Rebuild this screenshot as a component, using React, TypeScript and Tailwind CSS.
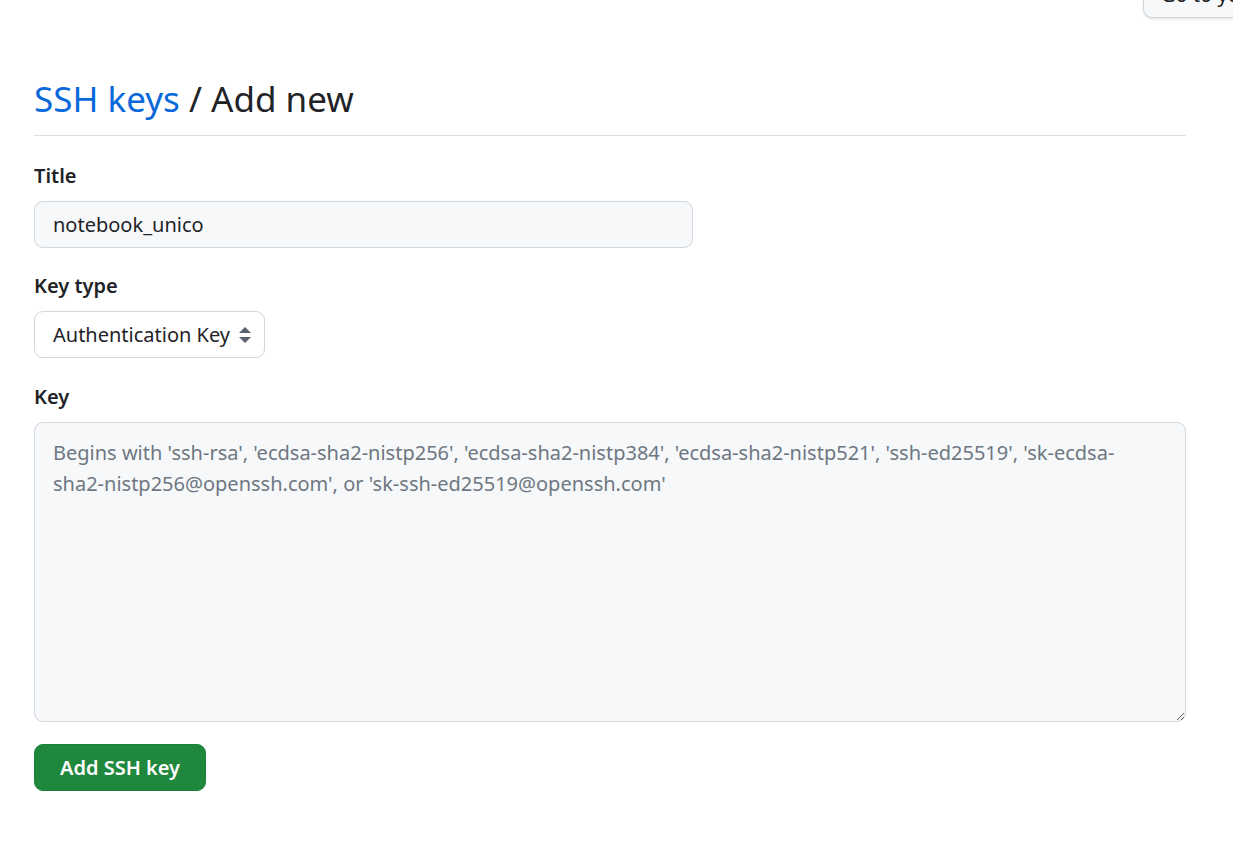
import React from 'react';

export default function App() {
  const placeholder =
    "Begins with 'ssh-rsa', 'ecdsa-sha2-nistp256', 'ecdsa-sha2-nistp384', 'ecdsa-sha2-nistp521', 'ssh-ed25519', 'sk-ecdsa-sha2-nistp256@openssh.com', or 'sk-ssh-ed25519@openssh.com'";

  return (
    <div className="relative min-h-[853px] bg-white text-[#1f2328] overflow-hidden" style={{ fontFamily: '"Noto Sans", "Open Sans", sans-serif' }}>
      {/* skip link peeking from the top */}
      <div className="absolute left-[1143px] top-[-30px] h-[48px] pl-[17px] pr-[18px] flex items-end pb-[7px] border border-[#d0d7de] rounded-[9px] bg-[#f6f8fa] text-[20px] whitespace-nowrap shadow-sm">
        Go to your profile
      </div>

      <div className="w-[1152px] ml-[34px] pt-[72px]">
        <div className="pb-[9px] border-b border-[#d8dee4]">
          <h2 className="text-[35px] leading-[54px] font-normal">
            <a className="text-[#0969da]" href="#">SSH keys</a> / Add new
          </h2>
        </div>

        <form className="mt-[25px]">
          <div>
            <label className="block text-[20px] font-semibold leading-[30px]">Title</label>
            <input
              defaultValue="notebook_unico"
              className="mt-[10px] w-[659px] h-[47px] px-[18px] text-[20px] bg-[#f6f8fa] border border-[#d0d7de] rounded-[9px] outline-none"
            />
          </div>

          <div className="mt-[23px]">
            <label className="block text-[20px] font-semibold leading-[30px]">Key type</label>
            <div className="mt-[10px] w-[231px] h-[47px] pl-[18px] pr-[12px] flex items-center justify-between text-[20px] bg-white border border-[#d0d7de] rounded-[9px]">
              <span>Authentication Key</span>
              <svg width="14" height="20" viewBox="0 0 14 20" fill="#59636e">
                <path d="M7 2 L13 8 H1 Z" />
                <path d="M7 18 L13 12 H1 Z" />
              </svg>
            </div>
          </div>

          <div className="mt-[24px]">
            <label className="block text-[20px] font-semibold leading-[30px]">Key</label>
            <textarea
              placeholder={placeholder}
              className="mt-[10px] block w-[1152px] h-[300px] pl-[18px] pr-[60px] py-[14px] text-[20px] leading-[31px] bg-[#f6f8fa] border border-[#d0d7de] rounded-[9px] outline-none placeholder:text-[#6e7781]"
            />
          </div>

          <button
            type="button"
            className="mt-[22px] h-[47px] w-[172px] rounded-[9px] bg-[#1f883d] text-white text-[20px] font-semibold border border-[#1a7f37]"
          >
            Add SSH key
          </button>
        </form>
      </div>
    </div>
  );
}
